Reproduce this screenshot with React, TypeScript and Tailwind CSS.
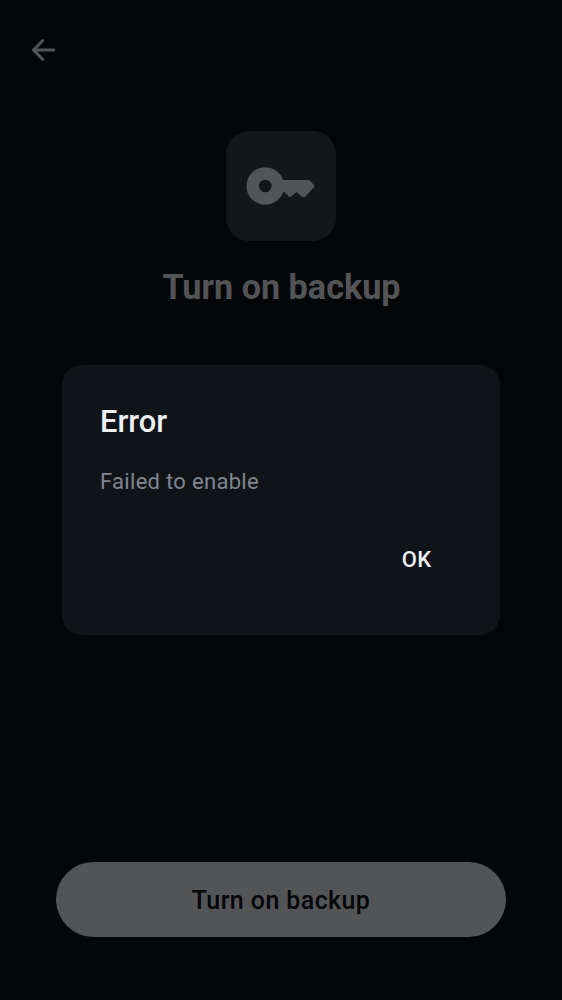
export default function App() {
  return (
    <main className="relative flex h-[1000px] w-full flex-col items-center bg-[#050608] font-['Roboto',sans-serif] text-[#535456]">
      <header className="flex w-full pt-[35px] pl-[28px]">
        <button aria-label="Back" className="size-[30px]">
          <svg viewBox="0 0 30 30" className="size-[30px]" fill="none" stroke="currentColor" strokeWidth="3" strokeLinecap="round" strokeLinejoin="round">
            <path d="M25.700 15H5.500M14.800 5.500L5.500 15L14.800 24.500" />
          </svg>
        </button>
      </header>
      <div className="mt-[66px] flex h-[109.500px] w-[109.500px] shrink-0 items-center justify-center rounded-[23px] bg-[#15161a]">
        <svg viewBox="0 0 70 40" className="h-10 w-[70px]" fill="currentColor">
          <path fillRule="evenodd" d="M19.300 1.200a18.800 18.800 0 1 0 17.600 25.300c.5-.7 1.200-.8 1.800-.2l3.800 4c.9.900 2.200.9 3.100 0l4.900-4.200 5.300 4.400c1.200.9 2.600.9 3.600-.1l8.500-9.200c.6-.8.6-1.800-.1-2.500l-4-4c-.5-.4-1-.6-1.700-.6H37.100A18.800 18.800 0 0 0 19.300 1.200zM19.300 13.700a6.300 6.300 0 1 1 0 12.600 6.300 6.300 0 0 1 0-12.600z" />
        </svg>
      </div>
      <h1 className="mt-[26.500px] pl-px text-[34.200px] leading-10 font-bold">Turn on backup</h1>
      <button className="mt-auto mb-[63px] h-[75px] w-[450px] shrink-0 rounded-full bg-[#535456] pt-[2px] text-[25px] font-medium tracking-[0.4px] text-[#050608]">Turn on backup</button>
      <section role="dialog" aria-label="Error" className="absolute top-[365px] left-[62.300px] flex h-[269.500px] w-[437.400px] flex-col rounded-[20px] bg-[#101317] px-[37.700px] pt-[36.500px]">
        <h2 className="text-[30.800px] leading-10 font-medium text-[#edf0f5]">Error</h2>
        <p className="mt-[25.500px] text-[22px] leading-[30px] tracking-[0.3px] text-[#808691]">Failed to enable</p>
        <button className="mt-12 mr-[30.500px] self-end text-[22px] leading-[30px] font-medium tracking-[0.4px] text-[#edf0f5]">OK</button>
      </section>
    </main>
  );
}
